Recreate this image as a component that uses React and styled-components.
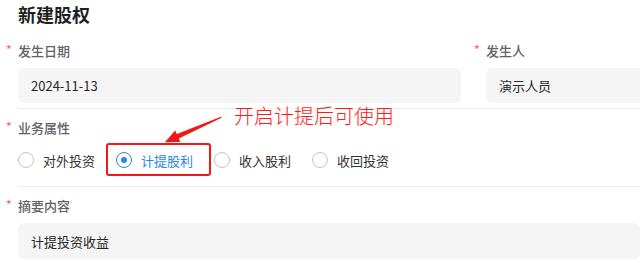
import React from "react";
import styled, { createGlobalStyle } from "styled-components";

const GlobalStyle = createGlobalStyle`
  body {
    margin: 0;
    background: #fff;
    overflow: hidden;
    font-family: "Noto Sans CJK SC", "Noto Sans", sans-serif;
  }
`;

export default function App() {
  const options = ["对外投资", "计提股利", "收入股利", "收回投资"];
  const selected = "计提股利";

  return (
    <Page>
      <GlobalStyle />
      <Title>新建股权</Title>
      <Section>
        <Columns>
          <Field>
            <Label>
              <Star>*</Star>发生日期
            </Label>
            <Input>2024-11-13</Input>
          </Field>
          <Field>
            <Label>
              <Star>*</Star>发生人
            </Label>
            <Input>演示人员</Input>
          </Field>
        </Columns>
      </Section>
      <Section $bottom={10}>
        <Label>
          <Star>*</Star>业务属性
        </Label>
        <RadioGroup>
          {options.map((opt) => (
            <RadioItem key={opt} $checked={opt === selected}>
              <Circle $checked={opt === selected} />
              {opt}
              {opt === selected && <Highlight />}
            </RadioItem>
          ))}
        </RadioGroup>
      </Section>
      <Section $last>
        <Label>
          <Star>*</Star>摘要内容
        </Label>
        <Input $tall>计提投资收益</Input>
      </Section>
      <Note>开启计提后可使用</Note>
      <Arrow width="66" height="36" viewBox="0 0 66 36">
        <polygon
          points="61,6.8 16.8,24 15.2,20.6 4.8,32.2 20.4,32 18.8,28.6 61.6,7.8"
          fill="#f01818"
        />
      </Arrow>
    </Page>
  );
}

const Page = styled.div`
  position: relative;
  width: 640px;
  height: 263px;
  padding-left: 18px;
  box-sizing: border-box;
  overflow: hidden;
`;

const Title = styled.h1`
  margin: 0 0 4px;
  font-size: 18px;
  line-height: 28px;
  font-weight: 700;
  color: #1f1f1f;
`;

const Section = styled.div`
  padding: 8px 0 ${(p) => (p.$last ? 0 : p.$bottom || 5)}px;
  border-bottom: ${(p) => (p.$last ? "none" : "1px solid #efefef")};
`;

const Columns = styled.div`
  display: grid;
  grid-template-columns: 443px 443px;
  column-gap: 25px;
`;

const Field = styled.div``;

const Label = styled.div`
  display: flex;
  align-items: center;
  height: 20px;
  margin-bottom: 8px;
  font-size: 13px;
  font-weight: 500;
  color: #606266;
`;

const Star = styled.span`
  width: 13px;
  margin-left: -13px;
  font-size: 12px;
  line-height: 12px;
  color: #f56c6c;
  padding-left: 1px;
  box-sizing: border-box;
  align-self: center;
  transform: translateY(-1px);
`;

const Input = styled.div`
  height: ${(p) => (p.$tall ? 36 : 35)}px;
  display: flex;
  align-items: center;
  padding-left: 13px;
  background: #f5f5f5;
  border-radius: 6px;
  font-size: 13px;
  color: #262626;
  white-space: nowrap;
`;

const RadioGroup = styled.div`
  display: flex;
  align-items: center;
  gap: 21px;
  height: 32px;
  margin-top: -1px;
`;

const RadioItem = styled.label`
  position: relative;
  display: flex;
  align-items: center;
  gap: 9px;
  height: 32px;
  font-size: 13px;
  color: ${(p) => (p.$checked ? "#2b85e4" : "#333")};
`;

const Circle = styled.span`
  width: 16px;
  height: 16px;
  box-sizing: border-box;
  border-radius: 50%;
  border: 1px solid ${(p) => (p.$checked ? "#2b85e4" : "#c4c4c4")};
  display: flex;
  align-items: center;
  justify-content: center;
  &::after {
    content: "";
    width: 6px;
    height: 6px;
    border-radius: 50%;
    background: ${(p) => (p.$checked ? "#2b85e4" : "transparent")};
  }
`;

const Highlight = styled.span`
  position: absolute;
  left: -10px;
  right: -18px;
  top: -1px;
  bottom: 0;
  border: 2px solid #f01818;
  border-radius: 3px;
  pointer-events: none;
`;

const Note = styled.div`
  position: absolute;
  left: 234px;
  top: 102px;
  font-size: 20px;
  line-height: 28px;
  font-weight: 300;
  color: #ff1a1a;
  white-space: nowrap;
`;

const Arrow = styled.svg`
  position: absolute;
  left: 160px;
  top: 110px;
`;
